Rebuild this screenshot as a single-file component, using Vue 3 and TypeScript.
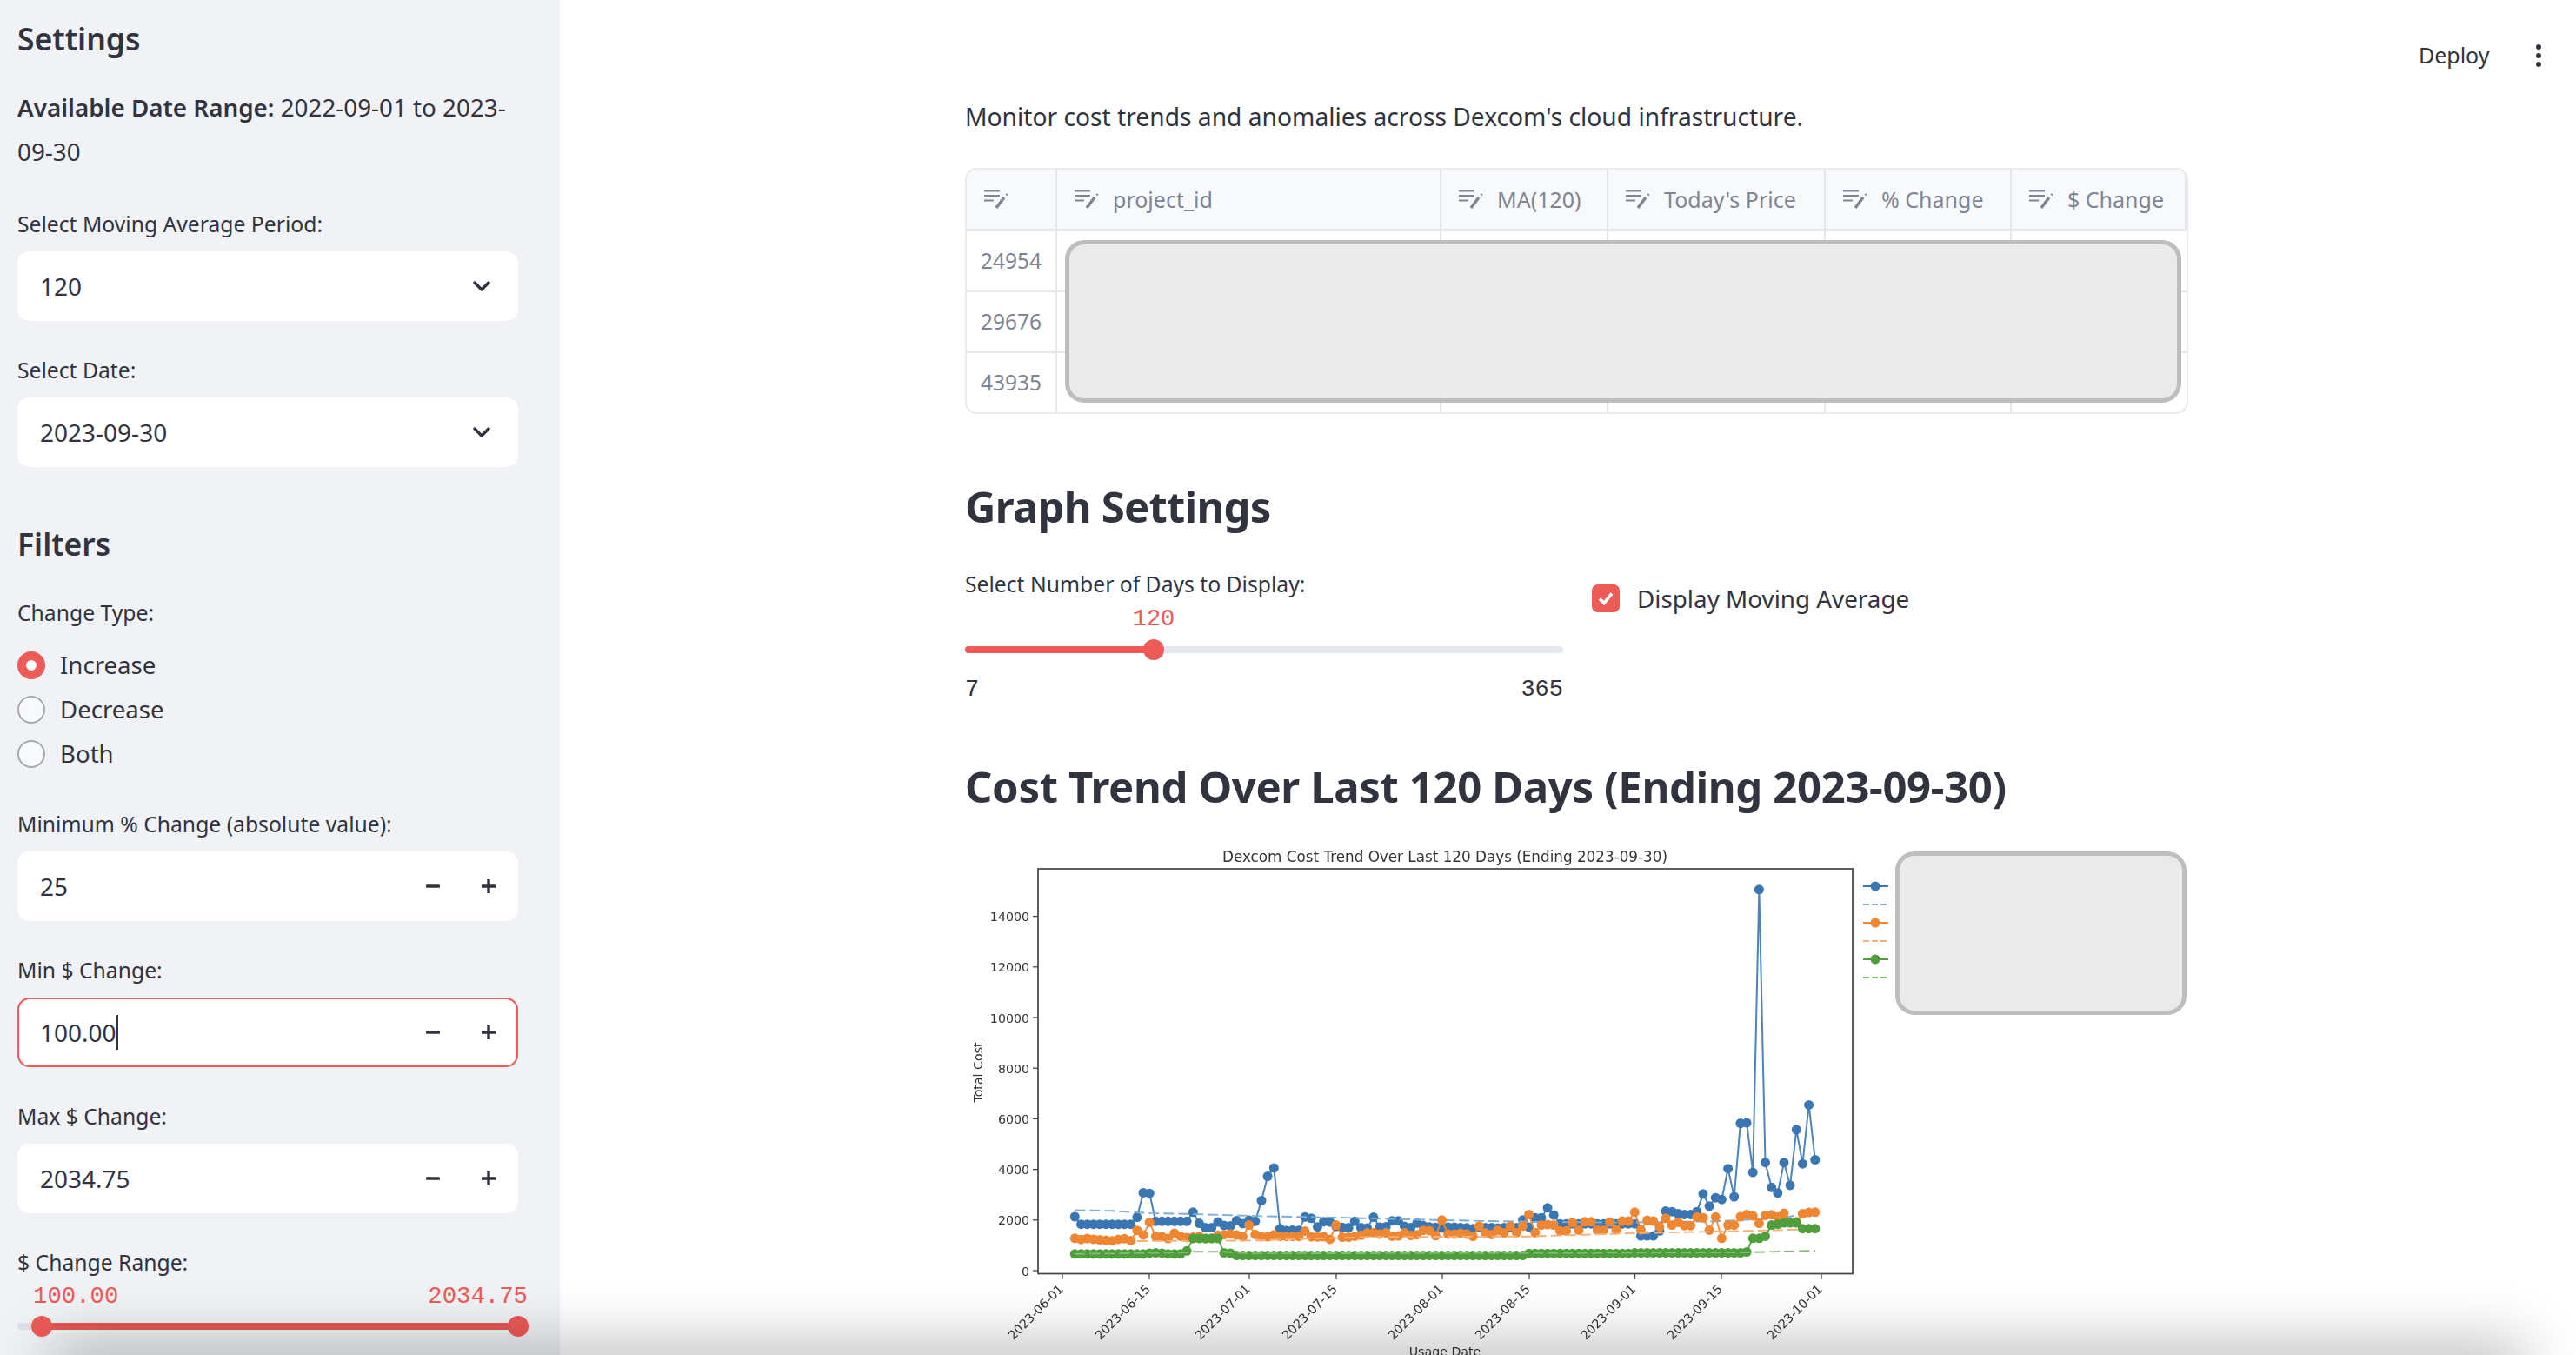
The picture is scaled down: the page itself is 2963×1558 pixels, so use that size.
<script setup lang="ts">
const fill = (n: number, v: number): number[] => Array(n).fill(v)

// values for days 2..121 counted from 2023-06-01
const blue: number[] = [
  2130, ...fill(9, 1830), 2110, 3080, 3050, ...fill(6, 1950), 2310, 1870, 1700, 1700, 1920, 1790, 1770, 1980, 1860, 1990, 1950,
  2770, 3730, 4060, 1660, 1580, 1600, 1590, 2120, 2070, 1730, 1930, 1920, 1750, 1710, 1700, 1950, 1700, 1680, 2110, 1720, 1740,
  1970, 1970, 1750, 1700, 1880, 1780, 1730, 1710, 1680, 1720, 1720, 1700, 1690, 1660, 1700, 1700, 1700, 1680, 1700, 1700, 1700,
  2000, 1720, 2090, 2090, 2480, 2200, ...fill(13, 1850), 1370, 1370, 1370, 1570, 2350, 2330, 2250, 2220, 2220, 2330, 3030, 2550,
  2880, 2810, 4030, 2920, 5820, 5840, 3880, 15060, 4270, 3290, 3070, 4270, 3370, 5570, 4220, 6550, 4380
]
const orange: number[] = [
  1280, 1230, 1270, 1240, 1220, 1200, 1180, 1240, 1260, 1190, 1590, 1410, 1910, 1350, 1340, 1270, 1480, 1360, 1310, 1320, 1350,
  1270, 1280, 1400, 1420, 1450, 1410, 1340, 1800, 1430, 1340, 1340, 1420, 1350, 1350, 1350, 1350, 1560, 1340, 1330, 1340, 1240,
  1800, 1320, 1320, 1360, 1400, 1490, 1500, 1440, 1490, 1360, 1370, 1490, 1390, 1420, 1590, 1580, 1380, 2000, 1440, 1440, 1480,
  1440, 1350, 1760, 1490, 1430, 1590, 1490, 1760, 1500, 1760, 2220, 1500, 1800, 1820, 1800, 1570, 1570, 1900, 1600, 1930, 1930,
  1600, 1600, 1920, 1610, 1960, 1960, 2310, 1610, 1990, 1960, 1730, 2070, 1800, 1910, 1780, 1780, 2120, 2090, 1600, 2120, 1280,
  1800, 1800, 2130, 2220, 2160, 1870, 2180, 2210, 2120, 2270, 1900, 1930, 2250, 2300, 2310
]
const green: number[] = [
  ...fill(12, 660), 690, 700, 690, ...fill(3, 660), 780, ...fill(5, 1270), 700, 690, ...fill(47, 600), ...fill(17, 680),
  ...fill(18, 700), 740, 1280, 1280, 1360, 1800, 1840, 1890, 1890, 1890, 1660, 1660, 1660
]

const xAt = (d: number): number => 1222 + d * 7.155
const yAt = (v: number): number => 1460 - v * 0.0291

const interp = (stops: number[][]): string =>
  stops.map(([d, v]) => `${xAt(d).toFixed(1)},${yAt(v).toFixed(1)}`).join(' ')

const series = [
  {
    color: '#3a76b2', data: blue, dash: '#7fadd6',
    ma: interp([[2, 2390], [8, 2360], [14, 2270], [20, 2240], [32, 2150], [44, 2100], [60, 2000], [75, 1930], [90, 1900], [105, 1950], [116, 2090], [120, 2300]])
  },
  {
    color: '#ef8632', data: orange, dash: '#f5b078',
    ma: interp([[12, 1170], [30, 1190], [50, 1330], [75, 1350], [92, 1480], [110, 1570], [119, 1630]])
  },
  {
    color: '#4f9e3c', data: green, dash: '#80bd72',
    ma: interp([[2, 660], [20, 720], [21, 745], [26, 745], [30, 680], [75, 700], [110, 720], [121, 790]])
  }
].map((s) => ({
  ...s,
  points: s.data.map((v, i) => ({ x: +xAt(i + 2).toFixed(1), y: +yAt(v).toFixed(1) })),
  line: s.data.map((v, i) => `${xAt(i + 2).toFixed(1)},${yAt(v).toFixed(1)}`).join(' ')
}))

const yTicks = [0, 2000, 4000, 6000, 8000, 10000, 12000, 14000].map((v) => ({ v, y: yAt(v) }))
const xTicks = [
  ['2023-06-01', 1222], ['2023-06-15', 1322], ['2023-07-01', 1437], ['2023-07-15', 1537], ['2023-08-01', 1659],
  ['2023-08-15', 1759], ['2023-09-01', 1880.5], ['2023-09-15', 1980], ['2023-10-01', 2095]
].map(([t, x]) => ({ t: t as string, x: x as number }))

const legend = [
  { y: 1018, c: '#3a76b2', dash: false }, { y: 1039, c: '#7fadd6', dash: true },
  { y: 1060, c: '#ef8632', dash: false }, { y: 1081, c: '#f5b078', dash: true },
  { y: 1102, c: '#4f9e3c', dash: false }, { y: 1123, c: '#80bd72', dash: true }
]

const columns = [
  { name: '', w: 104 }, { name: 'project_id', w: 442 }, { name: 'MA(120)', w: 192 },
  { name: "Today's Price", w: 250 }, { name: '% Change', w: 214 }, { name: '$ Change', w: 201 }
]
const rows = ['24954', '29676', '43935']
const numberFields = [
  { label: 'Minimum % Change (absolute value):', value: '25', focus: false },
  { label: 'Min $ Change:', value: '100.00', focus: true },
  { label: 'Max $ Change:', value: '2034.75', focus: false }
]
</script>

<template>
  <div class="page">
    <aside class="sidebar">
      <h2 class="side-title first">Settings</h2>
      <p class="range"><strong>Available Date Range:</strong> 2022-09-01 to 2023-09-30</p>

      <div class="field first-field">
        <label class="label">Select Moving Average Period:</label>
        <div class="control">
          <span>120</span>
          <svg class="chev" width="20" height="12" viewBox="0 0 20 12"><path d="M2 2l8 8 8-8" /></svg>
        </div>
      </div>
      <div class="field gap">
        <label class="label">Select Date:</label>
        <div class="control">
          <span>2023-09-30</span>
          <svg class="chev" width="20" height="12" viewBox="0 0 20 12"><path d="M2 2l8 8 8-8" /></svg>
        </div>
      </div>

      <h2 class="side-title filters">Filters</h2>
      <div class="label change-type">Change Type:</div>
      <div class="radios">
        <div class="radio-row"><span class="radio on"></span>Increase</div>
        <div class="radio-row"><span class="radio"></span>Decrease</div>
        <div class="radio-row"><span class="radio"></span>Both</div>
      </div>

      <div class="numbers">
        <div v-for="f in numberFields" :key="f.label" class="field">
          <label class="label">{{ f.label }}</label>
          <div class="control" :class="{ focus: f.focus }">
            <span class="num-value">{{ f.value }}<i v-if="f.focus" class="caret"></i></span>
            <span class="steppers">
              <svg width="16" height="16" viewBox="0 0 16 16"><rect x="0" y="6.3" width="16" height="3.4" rx="1" /></svg>
              <svg width="16" height="16" viewBox="0 0 16 16"><path d="M6.3 0h3.4v6.3H16v3.4H9.700V16H6.300V9.700H0V6.300h6.300z" /></svg>
            </span>
          </div>
        </div>
      </div>

      <div class="label range-label">$ Change Range:</div>
      <div class="range-values"><span>100.00</span><span>2034.75</span></div>
      <div class="range-slider">
        <div class="range-track"><div class="range-fill"></div></div>
        <span class="thumb left"></span>
        <span class="thumb right"></span>
      </div>
    </aside>

    <main class="main">
      <p class="intro">Monitor cost trends and anomalies across Dexcom's cloud infrastructure.</p>

      <div class="table-wrap">
        <div class="table">
          <div v-for="c in columns" :key="c.name" class="th" :style="{ width: c.w + 'px' }">
            <svg class="col-icon" width="28" height="22" viewBox="0 0 28 22">
              <path d="M0 1.500h18M0 7h18M0 12.500h11" />
              <path class="pen" d="M14 21l9-12" />
              <path class="pen-tip" d="M25.500 6.500l1.200-1.500" />
            </svg>
            <span v-if="c.name">{{ c.name }}</span>
          </div>
          <div class="tr" v-for="r in rows" :key="r">
            <div v-for="(c, i) in columns" :key="c.name" class="td" :style="{ width: c.w + 'px' }">
              <template v-if="i === 0">{{ r }}</template>
            </div>
          </div>
        </div>
        <div class="mask table-mask"></div>
      </div>

      <h2 class="section graph-title">Graph Settings</h2>

      <div class="graph-controls">
        <div class="days">
          <div class="label">Select Number of Days to Display:</div>
          <div class="day-value">120</div>
          <div class="day-slider">
            <div class="day-track"><div class="day-fill"></div></div>
            <span class="thumb day-thumb"></span>
          </div>
          <div class="day-ticks"><span>7</span><span>365</span></div>
        </div>
        <div class="check">
          <span class="box">
            <svg width="20" height="18" viewBox="0 0 20 18"><path d="M3 9.500l5 5L17 3.500" /></svg>
          </span>
          Display Moving Average
        </div>
      </div>

      <h2 class="section cost-title">Cost Trend Over Last 120 Days (Ending 2023-09-30)</h2>

      <div class="chart-wrap">
        <svg class="chart" width="1407" height="590" viewBox="1110 970 1407 590">
          <text class="ct title" x="1662" y="990" text-anchor="middle">Dexcom Cost Trend Over Last 120 Days (Ending 2023-09-30)</text>
          <rect x="1194" y="998" width="937" height="465.500" fill="#fff" stroke="#444" stroke-width="1.700" />
          <g v-for="t in yTicks" :key="t.v">
            <line x1="1188" x2="1194" :y1="t.y" :y2="t.y" stroke="#444" stroke-width="1.300" />
            <text class="ct" x="1184" :y="t.y + 5.500" text-anchor="end">{{ t.v }}</text>
          </g>
          <g v-for="t in xTicks" :key="t.t">
            <line :x1="t.x" :x2="t.x" y1="1464" y2="1470" stroke="#444" stroke-width="1.300" />
            <text class="ct" text-anchor="end" :transform="`translate(${t.x + 2} 1482) rotate(-45)`">{{ t.t }}</text>
          </g>
          <text class="ct" x="1662" y="1558" text-anchor="middle">Usage Date</text>
          <text class="ct" text-anchor="middle" transform="translate(1130 1232) rotate(-90)">Total Cost</text>

          <g v-for="s in series" :key="s.color">
            <polyline :points="s.line" fill="none" :stroke="s.color" stroke-width="2" stroke-opacity="0.9" />
            <circle v-for="(p, i) in s.points" :key="i" :cx="p.x" :cy="p.y" r="5.500" :fill="s.color" />
            <polyline :points="s.ma" fill="none" :stroke="s.dash" stroke-width="1.900" stroke-dasharray="12 5" />
          </g>

          <g v-for="l in legend" :key="l.y">
            <line x1="2143" x2="2172" :y1="l.y" :y2="l.y" :stroke="l.c" stroke-width="2" :stroke-dasharray="l.dash ? '7 3' : undefined" />
            <circle v-if="!l.dash" cx="2157" :cy="l.y" r="5.500" :fill="l.c" />
          </g>
        </svg>
        <div class="mask legend-mask"></div>
      </div>
    </main>

    <div class="topbar">
      <span class="deploy">Deploy</span>
      <span class="dots"><i></i><i></i><i></i></span>
    </div>
    <div class="edge-shadow"></div>
  </div>
</template>

<style>
html, body { margin: 0; background: #fff; }
</style>

<style scoped>
.page {
  position: relative;
  display: flex;
  width: 2963px;
  height: 1558px;
  overflow: hidden;
  background: #fff;
  color: #31333f;
  font-family: "Noto Sans", "Open Sans", sans-serif;
  font-size: 24.700px;
}
h2, p { margin: 0; }

/* Sidebar */
.sidebar {
  box-sizing: border-box;
  flex: none;
  width: 644px;
  padding: 0 48px 0 20px;
  background: #f0f2f6;
}
.side-title { font-size: 35.500px; font-weight: 600; line-height: 50px; }
.first { margin-top: 19px; }
.filters { margin-top: 63px; }
.range { margin-top: 29px; line-height: 51px; font-size: 27.800px; }
.range strong { font-weight: 600; }
.label { height: 32px; line-height: 32px; white-space: nowrap; }
.field { display: flex; flex-direction: column; gap: 15px; }
.first-field { margin-top: 42px; }
.gap { margin-top: 41px; }
.control {
  box-sizing: border-box;
  display: flex;
  align-items: center;
  justify-content: space-between;
  height: 80px;
  padding: 0 32px 0 26px;
  background: #fff;
  border-radius: 14px;
  font-size: 28px;
}
.control.focus { border: 2px solid #ee5b56; padding: 0 24px 0 24px; }
.chev path { fill: none; stroke: #31333f; stroke-width: 3.400; stroke-linecap: round; stroke-linejoin: round; }
.change-type { margin-top: 39px; }
.radios { margin-top: 18px; }
.radio-row { box-sizing: border-box; display: flex; align-items: center; gap: 17px; height: 51px; padding-bottom: 2px; font-size: 27.600px; }
.radio {
  box-sizing: border-box;
  width: 32px;
  height: 32px;
  margin-top: 2px;
  border-radius: 50%;
  background: #f8f9fb;
  border: 2px solid #a8a9b0;
}
.radio.on { border: 10px solid #ee5b56; background: #fff; }
.numbers { display: flex; flex-direction: column; gap: 41px; margin-top: 40px; }
.num-value { display: flex; align-items: center; }
.caret { display: block; width: 2px; height: 40px; background: #31333f; }
.steppers { display: flex; gap: 48px; }
.control .steppers { margin-right: -6px; }
.control.focus .steppers { margin-right: 0; }
.steppers svg { fill: #31333f; }
.range-label { margin-top: 41px; }
.range-values {
  display: flex;
  justify-content: space-between;
  margin: 6px -11px 0 18px;
  height: 34px;
  line-height: 34px;
  color: #ee5b56;
  font-family: "Liberation Mono", monospace;
  font-size: 27.300px;
}
.range-slider { position: relative; height: 24px; margin-top: 5px; }
.range-track { position: relative; top: 8px; height: 8px; background: #dfe2ea; border-radius: 4px; }
.range-fill { position: absolute; left: 28px; right: 0; top: 0; bottom: 0; background: #e55a52; }
.thumb { position: absolute; top: 0; width: 24px; height: 24px; border-radius: 50%; background: #ee5b56; }
.thumb.left { left: 16px; }
.thumb.right { right: -12px; }

/* Main */
.main { flex: none; width: 1407px; margin-left: 466px; padding-top: 114px; }
.intro { line-height: 40px; font-size: 28.200px; white-space: nowrap; }
.table-wrap { position: relative; margin-top: 39px; }
.table {
  box-sizing: border-box;
  display: flex;
  flex-wrap: wrap;
  width: 1407px;
  height: 283px;
  overflow: hidden;
  background: #fff;
  border: 2px solid #eaebee;
  border-radius: 14px;
}
.th {
  box-sizing: border-box;
  display: flex;
  align-items: center;
  gap: 16px;
  height: 71px;
  padding-left: 20px;
  background: #f8f9fb;
  border-right: 2px solid #e6e7ea;
  border-bottom: 3px solid #e6e7ea;
  color: #808495;
  font-size: 25px;
  white-space: nowrap;
}
.th:last-of-type { border-right: 0; }
.tr { display: flex; width: 100%; }
.td {
  box-sizing: border-box;
  display: flex;
  align-items: center;
  justify-content: center;
  height: 70px;
  padding-bottom: 2px;
  border-right: 2px solid #e6e7ea;
  border-bottom: 2px solid #e6e7ea;
  color: #808495;
  font-size: 24.500px;
}
.td:last-child { border-right: 0; }
.col-icon { flex: none; }
.col-icon path { fill: none; stroke: #808495; stroke-width: 1.800; }
.col-icon .pen { stroke-width: 3.400; }
.col-icon .pen-tip { stroke-width: 2.400; }
.mask {
  box-sizing: border-box;
  position: absolute;
  background: #eaeaea;
  border: 5px solid #bebebe;
  border-radius: 22px;
}
.table-mask { left: 115px; top: 83px; width: 1284px; height: 187px; }
.section { font-weight: 700; white-space: nowrap; }
.graph-title { margin-top: 76px; font-size: 49px; line-height: 60px; letter-spacing: -0.750px; }
.graph-controls { display: flex; gap: 33px; margin-top: 44px; }
.days { flex: none; width: 688px; }
.day-value {
  margin-top: 9px;
  height: 30px;
  line-height: 30px;
  width: 434px;
  text-align: center;
  color: #ee5b56;
  font-family: "Liberation Mono", monospace;
  font-size: 27px;
}
.day-slider { position: relative; height: 40px; }
.day-track { position: relative; top: 16px; height: 8px; background: #e6e8ef; border-radius: 4px; overflow: hidden; }
.day-fill { width: 217px; height: 100%; background: #ee5b56; }
.day-thumb { left: 205px; top: 8px; }
.day-ticks {
  display: flex;
  justify-content: space-between;
  margin-top: 10px;
  height: 32px;
  line-height: 32px;
  font-family: "Liberation Mono", monospace;
  font-size: 27px;
}
.check { display: flex; align-items: center; gap: 20px; height: 32px; margin-top: 16px; font-size: 27.800px; white-space: nowrap; }
.box {
  display: flex;
  align-items: center;
  justify-content: center;
  width: 32px;
  height: 32px;
  background: #ee5b56;
  border-radius: 7px;
}
.box path { fill: none; stroke: #fff; stroke-width: 3.600; }
.cost-title { margin-top: 60px; font-size: 49px; line-height: 70px; letter-spacing: -0.350px; }
.chart-wrap { position: relative; margin-top: 32px; }
.chart { display: block; overflow: visible; filter: blur(0.45px); }
.ct { font-family: "DejaVu Sans", sans-serif; font-size: 14.200px; fill: #333; }
.title { font-size: 16.800px; }
.legend-mask { left: 1070px; top: 8px; width: 335px; height: 188px; }

/* Top bar overlay */
.topbar { position: absolute; top: 43px; right: 40px; display: flex; align-items: center; gap: 53px; height: 40px; }
.deploy { font-size: 25px; }
.dots { display: flex; flex-direction: column; gap: 3.500px; margin-top: 2px; }
.dots i { display: block; width: 6.500px; height: 6.500px; border-radius: 50%; background: #31333f; }

/* Shadow falling on the lower edge of the window */
.edge-shadow {
  position: absolute;
  left: 70px;
  right: 70px;
  bottom: -40px;
  height: 40px;
  box-shadow: 0 0 70px 12px rgba(0, 0, 0, 0.28);
  pointer-events: none;
}
</style>
